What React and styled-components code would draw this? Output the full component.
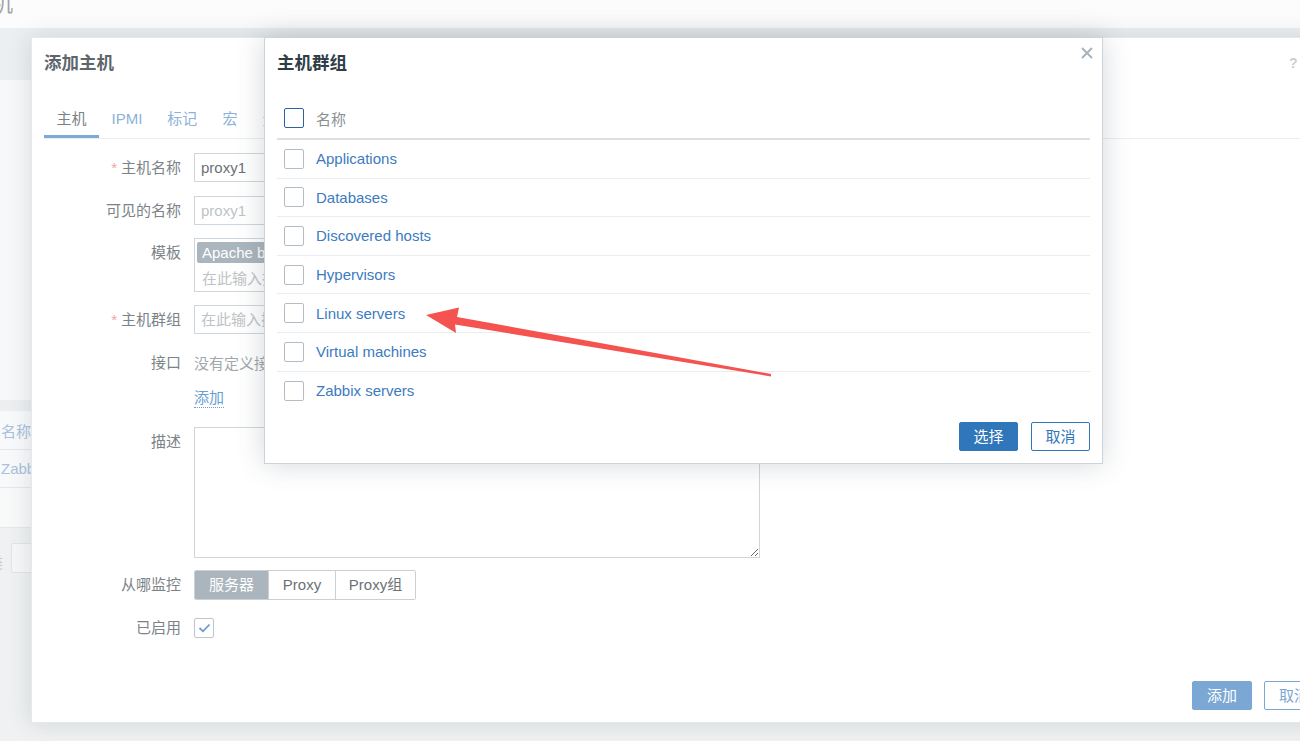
import React from 'react'
import styled, { createGlobalStyle } from 'styled-components'

const GlobalStyle = createGlobalStyle`
  html, body { margin: 0; padding: 0; }
  body {
    font-family: "Liberation Sans", Arial, "Noto Sans CJK SC", sans-serif;
    font-size: 15px;
    background: #eff1f2;
    overflow: hidden;
  }
  * { box-sizing: border-box; }
`

const Page = styled.div`
  position: relative;
  width: 1300px;
  height: 741px;
  overflow: hidden;
  background: #eff1f2;
`

/* ---------- dimmed page behind the dialogs ---------- */
const BgPage = styled.div`
  display: flex;
  flex-direction: column;
  height: 100%;
`

const BgHeader = styled.div`
  height: 28px;
  background: #fcfcfc;
  overflow: hidden;
`

const BgTitle = styled.h1`
  margin: -9px 0 0 -31px;
  font-size: 22px;
  line-height: 26px;
  font-weight: normal;
  color: #9ea4a8;
`

const BgBand = styled.div`
  height: ${p => p.$h}px;
  background: ${p => p.$bg};
  border-bottom: ${p => (p.$line ? '1px solid #e4e7e9' : 'none')};
  display: flex;
  align-items: center;
  color: #a9c1dd;
  font-size: 15px;
  padding-left: 1px;
`

const BgFilter = styled.div`
  flex: 1;
  background: #eff1f2;
  display: flex;
  align-items: flex-start;
  padding-top: 15px;
  gap: 8px;
`

const BgLabel = styled.span`
  margin-left: -12px;
  margin-top: 8px;
  color: #c3c7ca;
`

const BgInput = styled.div`
  width: 40px;
  height: 30px;
  border: 1px solid #e2e5e7;
  background: #f6f7f8;
  border-radius: 2px;
`

/* ---------- dialogs ---------- */
const Dialog = styled.div`
  position: absolute;
  left: ${p => p.$left}px;
  top: ${p => p.$top}px;
  width: ${p => p.$width}px;
  height: ${p => p.$height}px;
  background: #fff;
  border: 1px solid ${p => p.$border};
  box-shadow: 0 0 ${p => p.$blur}px rgba(60, 75, 85, ${p => p.$shadow});
  display: flex;
  flex-direction: column;
  padding: 0 12px 12px 12px;
  overflow: hidden;
`

const DialogHead = styled.div`
  display: flex;
  align-items: flex-start;
  padding-top: 12px;
`

const DialogTitle = styled.h4`
  margin: 0;
  flex: 1;
  font-size: 17.5px;
  line-height: 26px;
  font-weight: bold;
  color: ${p => p.$color};
`

const HeadIcon = styled.span`
  color: ${p => p.$color};
  font-size: ${p => p.$size}px;
  line-height: 1;
  margin-top: ${p => p.$top}px;
  margin-left: ${p => p.$gap}px;
  font-weight: bold;
`

const CloseIcon = styled.svg`
  width: 12px;
  height: 12px;
  margin-top: -3px;
  margin-right: -3px;
`

/* ---------- outer form ---------- */
const TabBar = styled.div`
  display: flex;
  margin-top: 24px;
  border-bottom: 1px solid #eaedef;
`

const Tab = styled.div`
  height: 38px;
  padding: 3px 12.5px 0;
  line-height: 32px;
  border-bottom: 3px solid ${p => (p.$active ? '#7eaad6' : 'transparent')};
  color: ${p => (p.$active ? '#7c8388' : '#8db1d8')};
  white-space: nowrap;
`

const Form = styled.div`
  display: flex;
  flex-direction: column;
  padding-top: 14px;
`

const Row = styled.div`
  display: flex;
  align-items: flex-start;
  gap: 13px;
  margin-top: ${p => p.$mt}px;
`

const Label = styled.div`
  width: 137px;
  flex: none;
  text-align: right;
  line-height: 29px;
  color: #7c8388;
`

const Star = styled.span`
  color: #f0a3a3;
  margin-right: 4px;
`

const Field = styled.div`
  display: flex;
  align-items: center;
  min-height: ${p => p.$h}px;
  color: ${p => p.$color || '#6c7176'};
`

const TextInput = styled.div`
  width: 566px;
  height: 29px;
  border: 1px solid #cfd6db;
  padding: 0 6px;
  line-height: 27px;
  color: ${p => (p.$placeholder ? '#c0c3c6' : '#6c7176')};
`

const MultiSelect = styled.div`
  width: 566px;
  height: 54px;
  border: 1px solid #cfd6db;
  padding: 3px 3px 0 2px;
  display: flex;
  flex-direction: column;
`

const Chip = styled.span`
  align-self: flex-start;
  background: #aab5bd;
  color: #fff;
  padding: 0 7px 0 5px;
  border-radius: 2px;
  line-height: 21px;
  width: 260px;
`

const Placeholder = styled.span`
  color: #c0c3c6;
  padding-left: 5px;
  margin-top: 4px;
`

const DottedLink = styled.span`
  color: #6a9fd4;
  border-bottom: 1px dotted #6a9fd4;
  line-height: 18px;
`

const TextArea = styled.textarea`
  width: 566px;
  height: 131px;
  border: 1px solid #cfd6db;
  border-radius: 0;
  outline: none;
  margin: 0;
  font: inherit;
  resize: both;
`

const Segmented = styled.div`
  display: flex;
  border: 1px solid #cad1d6;
  border-radius: 2px;
  height: 30px;
  overflow: hidden;
`

const Segment = styled.div`
  width: ${p => p.$w}px;
  text-align: center;
  line-height: 28px;
  background: ${p => (p.$active ? '#aab5bd' : '#fff')};
  color: ${p => (p.$active ? '#fff' : '#6c7176')};
  border-left: ${p => (p.$first ? 'none' : '1px solid #cad1d6')};
`

const Box = styled.div`
  width: 20px;
  height: 20px;
  flex: none;
  border: 1px solid ${p => p.$border};
  border-radius: 2px;
  display: flex;
  align-items: center;
  justify-content: center;
  background: #fff;
`

const Footer = styled.div`
  margin-top: auto;
  display: flex;
  justify-content: flex-end;
  gap: ${p => p.$gap}px;
`

const Button = styled.div`
  width: ${p => p.$w}px;
  height: 29px;
  border-radius: 2px;
  text-align: center;
  line-height: 27px;
  border: 1px solid ${p => p.$color};
  background: ${p => (p.$filled ? p.$color : '#fff')};
  color: ${p => (p.$filled ? '#fff' : p.$color)};
`

/* ---------- group list ---------- */
const List = styled.div`
  margin-top: 24px;
  display: flex;
  flex-direction: column;
`

const ListHead = styled.div`
  height: 40px;
  display: flex;
  align-items: center;
  gap: 12px;
  padding: 0 0 2px 7px;
  border-bottom: 2px solid #dce0e4;
  color: #8a9095;
`

const ListRow = styled.div`
  height: 38.6px;
  display: flex;
  align-items: center;
  gap: 12px;
  padding-left: 7px;
  border-bottom: ${p => (p.$last ? 'none' : '1px solid #eaedf0')};
  color: #3c7bbf;
`

const Arrow = styled.svg`
  position: absolute;
  left: 0;
  top: 0;
  width: 1300px;
  height: 741px;
  pointer-events: none;
`

const groups = [
  'Applications',
  'Databases',
  'Discovered hosts',
  'Hypervisors',
  'Linux servers',
  'Virtual machines',
  'Zabbix servers',
]

const tabs = ['主机', 'IPMI', '标记', '宏', '资产记录', '加密', '值映射']

export default function App() {
  return (
    <Page>
      <GlobalStyle />

      <BgPage>
        <BgHeader>
          <BgTitle>主机</BgTitle>
        </BgHeader>
        <BgBand $h={52} $bg="#eceff1" />
        <BgBand $h={320} $bg="#f7f8f9" />
        <BgBand $h={11} $bg="#eceef0" />
        <BgBand $h={39} $bg="#f8f9fa" $line>名称</BgBand>
        <BgBand $h={38} $bg="#f8f9fa" $line>Zabbix server</BgBand>
        <BgBand $h={40} $bg="#f8f9f9" $line />
        <BgFilter>
          <BgLabel>类</BgLabel>
          <BgInput />
        </BgFilter>
      </BgPage>

      {/* 添加主机 */}
      <Dialog $left={31} $top={37} $width={1306} $height={686} $border="#e6e9eb" $blur={22} $shadow={0.16}>
        <DialogHead>
          <DialogTitle $color="#5e666c">添加主机</DialogTitle>
          <HeadIcon $color="#c9ced2" $size={14} $top={6} $gap={0}>?</HeadIcon>
          <HeadIcon $color="#c9ced2" $size={16} $top={4} $gap={17}>×</HeadIcon>
        </DialogHead>

        <TabBar>
          {tabs.map((t, i) => (
            <Tab key={t} $active={i === 0}>{t}</Tab>
          ))}
        </TabBar>

        <Form>
          <Row $mt={0}>
            <Label><Star>*</Star>主机名称</Label>
            <TextInput>proxy1</TextInput>
          </Row>
          <Row $mt={14}>
            <Label>可见的名称</Label>
            <TextInput $placeholder>proxy1</TextInput>
          </Row>
          <Row $mt={13}>
            <Label>模板</Label>
            <MultiSelect>
              <Chip>Apache by HTTP</Chip>
              <Placeholder>在此输入搜索</Placeholder>
            </MultiSelect>
          </Row>
          <Row $mt={13}>
            <Label><Star>*</Star>主机群组</Label>
            <TextInput $placeholder>在此输入搜索</TextInput>
          </Row>
          <Row $mt={14}>
            <Label>接口</Label>
            <Field $h={29} $color="#a2a7ab">没有定义接口。</Field>
          </Row>
          <Row $mt={8}>
            <Label />
            <Field $h={26}><DottedLink>添加</DottedLink></Field>
          </Row>
          <Row $mt={16}>
            <Label>描述</Label>
            <TextArea />
          </Row>
          <Row $mt={12}>
            <Label>从哪监控</Label>
            <Segmented>
              <Segment $w={73} $active $first>服务器</Segment>
              <Segment $w={67}>Proxy</Segment>
              <Segment $w={80}>Proxy组</Segment>
            </Segmented>
          </Row>
          <Row $mt={13}>
            <Label>已启用</Label>
            <Field $h={29}>
              <Box $border="#bdc6cc">
                <svg width="13" height="10" viewBox="0 0 13 10">
                  <path d="M1.5 5 L5 8.3 L11.5 1.5" fill="none" stroke="#6b9ad0" strokeWidth="1.8" />
                </svg>
              </Box>
            </Field>
          </Row>
        </Form>

        <Footer $gap={12}>
          <Button $w={60} $filled $color="#7aa7d3">添加</Button>
          <Button $w={60} $color="#7aa7d3">取消</Button>
        </Footer>
      </Dialog>

      {/* 主机群组 */}
      <Dialog $left={264} $top={37} $width={839} $height={427} $border="#cdd3d8" $blur={26} $shadow={0.22}>
        <DialogHead>
          <DialogTitle $color="#2f3d47">主机群组</DialogTitle>
          <CloseIcon viewBox="0 0 12 12">
            <path d="M1 1 L11 11 M11 1 L1 11" stroke="#a9b2b9" strokeWidth="2" />
          </CloseIcon>
        </DialogHead>

        <List>
          <ListHead>
            <Box $border="#2e639c" />
            <span>名称</span>
          </ListHead>
          {groups.map((g, i) => (
            <ListRow key={g} $last={i === groups.length - 1}>
              <Box $border="#b4bdc4" />
              <span>{g}</span>
            </ListRow>
          ))}
        </List>

        <Footer $gap={13}>
          <Button $w={59} $filled $color="#2f77ba">选择</Button>
          <Button $w={59} $color="#2f77ba">取消</Button>
        </Footer>
      </Dialog>

      <Arrow viewBox="0 0 1300 741">
        <polygon
          points="426,315 459,307.5 457,317 771,374 771,376.5 455,324.5 456,333"
          fill="#f5534f"
        />
      </Arrow>
    </Page>
  )
}
